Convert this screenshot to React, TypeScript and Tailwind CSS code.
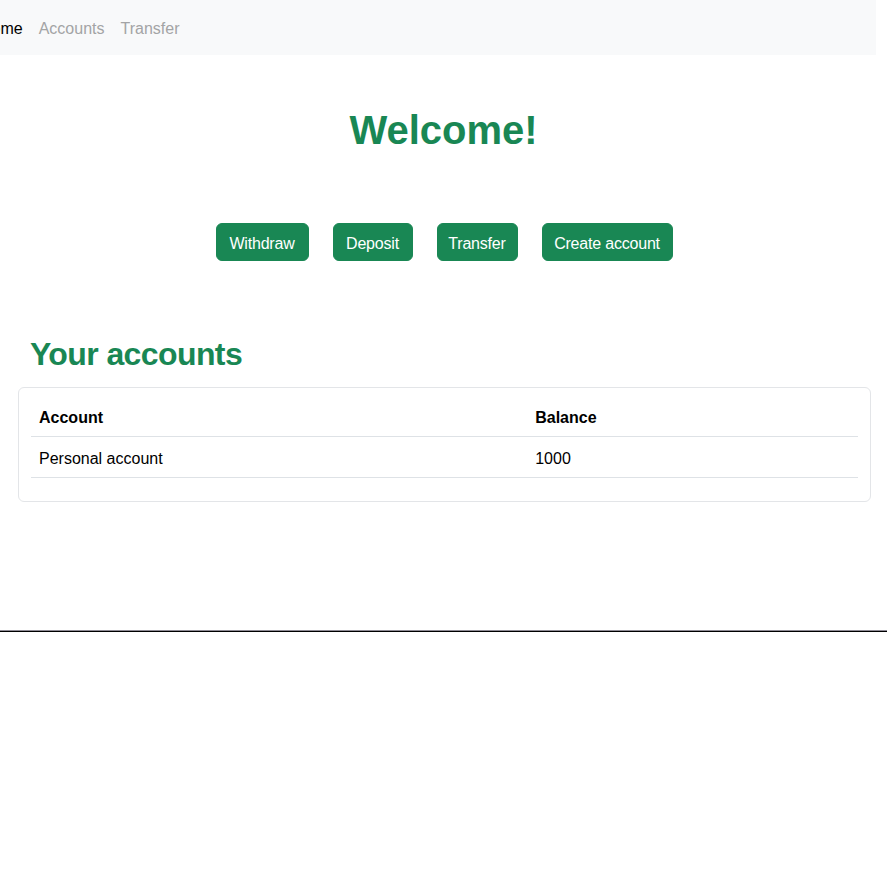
import React from "react";

const actions = [
  { label: "Withdraw", width: "w-[93px]" },
  { label: "Deposit", width: "w-[80px]" },
  { label: "Transfer", width: "w-[81px]" },
  { label: "Create account", width: "w-[131px]" },
];

const accounts = [{ name: "Personal account", balance: 1000 }];

const App = () => {
  return (
    <div className="min-h-[887px] bg-white font-['Liberation_Sans',Arial,sans-serif] text-base text-[#212529]">
      {/* Top navigation (scrolled so "Home" is partly hidden) */}
      <nav className="w-[876px] h-[55px] bg-[#f8f9fa] flex items-center overflow-hidden pt-[2px]">
        <ul className="flex items-center ml-[-28px]">
          <li className="px-2 text-black">Home</li>
          <li className="px-2 text-[#a3a4a5]">Accounts</li>
          <li className="px-2 text-[#a3a4a5]">Transfer</li>
        </ul>
      </nav>

      <main className="w-[887px]">
        <h1 className="mt-[51px] text-center text-[40px] leading-[48px] font-bold text-[#198754]">
          Welcome!
        </h1>

        <div className="mt-[69px] flex justify-center gap-6 pl-[1px]">
          {actions.map((a) => (
            <button
              key={a.label}
              className={`${a.width} h-[38px] pt-[3px] rounded-md bg-[#198754] border border-[#198754] text-white text-base leading-6 whitespace-nowrap tracking-[-0.2px]`}
            >
              {a.label}
            </button>
          ))}
        </div>

        <h2 className="mt-[74px] ml-[30px] text-[32px] leading-[38px] font-bold text-[#198754] tracking-[-0.6px]">
          Your accounts
        </h2>

        {/* Accounts card */}
        <div className="mt-[14px] ml-[18px] w-[853px] border border-[#e3e5e8] rounded-md px-3 pt-[8px] pb-[23px]">
          <table className="w-full text-left border-collapse">
            <thead>
              <tr className="border-b border-[#dee2e6]">
                <th className="w-[60%] px-2 pt-[10px] pb-[6px] font-bold text-black">Account</th>
                <th className="px-2 pt-[10px] pb-[6px] font-bold text-black">Balance</th>
              </tr>
            </thead>
            <tbody>
              {accounts.map((a) => (
                <tr key={a.name} className="border-b border-[#dee2e6]">
                  <td className="px-2 pt-[10px] pb-[6px] text-black">{a.name}</td>
                  <td className="px-2 pt-[10px] pb-[6px] text-black">{a.balance}</td>
                </tr>
              ))}
            </tbody>
          </table>
        </div>
      </main>

      <hr className="mt-[128px] w-[887px] border-0 border-t border-t-[#8e8a94] border-b border-b-black" />
    </div>
  );
};

export default App;
